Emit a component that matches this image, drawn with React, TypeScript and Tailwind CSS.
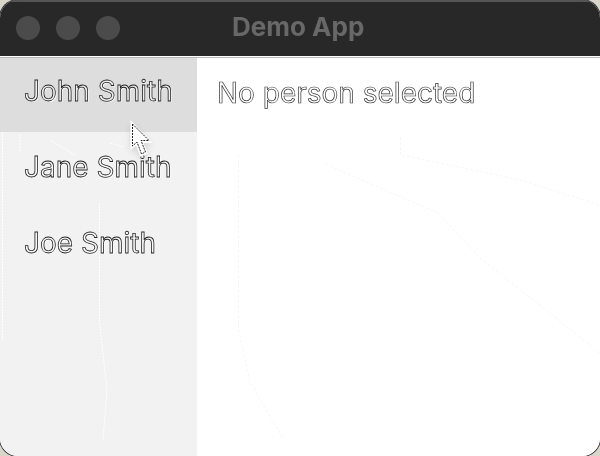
import React from "react";

const people = ["John Smith", "Jane Smith", "Joe Smith"];

function TitleBar() {
  return (
    <header className="relative flex h-14 shrink-0 items-start justify-center border-t-2 border-[#555555] bg-[#282828]">
      <div className="absolute left-4 top-[14px] flex gap-4">
        <span className="size-6 rounded-full bg-[#4b4b4b]" />
        <span className="size-6 rounded-full bg-[#4b4b4b]" />
        <span className="size-6 rounded-full bg-[#4b4b4b]" />
      </div>
      <h1 className="pr-[3px] text-[26px] leading-[50px] font-bold text-[#686868] will-change-transform">Demo App</h1>
    </header>
  );
}

function Cursor() {
  return (
    <svg className="absolute left-[128px] top-[119px] drop-shadow-md" width="26" height="40" viewBox="0 0 26 40">
      <path d="M2.5 1V31L8 26.5L12.5 38L20 34.5L15.5 24H24.5Z" fill="#fff" />
      <path d="M4.5 5L21 21.5H13L17.5 33L13.5 35L9 23L4.5 27Z" fill="#fff" stroke="#222" strokeWidth="1" strokeDasharray="2 1" />
    </svg>
  );
}

/* Barely visible contour lines over the panels. */
function FaintLines() {
  return (
    <svg className="pointer-events-none absolute left-0 top-0" width="600" height="456" fill="none">
      <path d="M400.500 137V155M325 164L438 213L480 258L600 353M402 155L520 180L600 205M238.500 155V330L250 382L284 440" stroke="#f6f6f6" strokeDasharray="3 2" />
      <path d="M99.500 203V322L107 390L103 440M2.500 132V340M20 134V152M50 140L75 155M110 143L124 147" stroke="#fff" strokeDasharray="2 1" />
    </svg>
  );
}

export default function App() {
  return (
    <div className="h-[456px] w-[600px] overflow-hidden bg-[#d9d5c8] font-['Inter',sans-serif]">
      <div className="relative flex h-full flex-col overflow-hidden rounded-[18px] bg-white shadow-[0_0_0_1px_#333]">
        <TitleBar />
        <div className="mt-px flex min-h-0 flex-1 border-t border-[#b8b8b8]">
          <nav className="w-[197px] shrink-0 bg-[#f2f2f2]">
            {people.map((name, i) => (
              <div
                key={name}
                className={`pl-6 text-[28px] whitespace-nowrap will-change-transform [-webkit-text-stroke:0.8px_#222] [text-shadow:1px_1px_0_#fff] ${
                  i === 0 ? "h-[74px] bg-[#dddddd] leading-[67px] text-[#eeeeee]" : "h-[76px] leading-[71px] text-[#f8f8f8]"
                }`}
              >
                {name}
              </div>
            ))}
          </nav>
          <main className="flex-1 bg-white pl-5 pt-[15px] text-[28px] leading-[40px] whitespace-nowrap text-white will-change-transform [-webkit-text-stroke:0.7px_#333]">
            No person selected
          </main>
        </div>
        <FaintLines />
        <Cursor />
      </div>
    </div>
  );
}
